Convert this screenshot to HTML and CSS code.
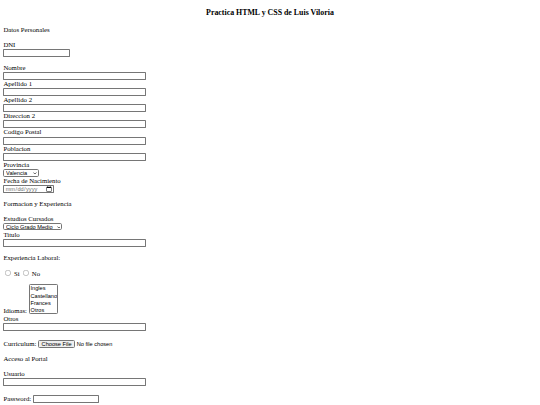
FILE: index.html
```html
<!DOCTYPE html>
<html lang="es">
<head>
<meta charset="utf-8">
<title>Practica HTML y CSS</title>
<link rel="stylesheet" href="styles.css">
</head>
<body>
<h3 class="title">Practica HTML y CSS de Luis Viloria</h3>
<form class="form">
<p>Datos Personales</p>
<p>DNI<br><input class="field" type="text"></p>
<p>Nombre<br><input class="field wide" type="text"><br>Apellido 1<br><input class="field wide" type="text"><br>Apellido 2<br><input class="field wide" type="text"><br>Direccion 2<br><input class="field wide" type="text"><br>Codigo Postal<br><input class="field wide" type="text"><br>Poblacion<br><input class="field wide" type="text"><br>Provincia<br><span class="sel"><select class="select prov"><option>Valencia</option><option>Madrid</option><option>Barcelona</option></select><svg class="chev" viewBox="0 0 10 6" width="9" height="6"><path d="M1 1l4 4 4-4" fill="none" stroke="#000" stroke-width="1.6"/></svg></span><br>Fecha de Nacimiento<br><input class="field date" type="date"></p>
<p>Formacion y Experiencia</p>
<p>Estudios Cursados<br><span class="sel"><select class="select est"><option>Ciclo Grado Medio</option><option>Ciclo Grado Superior</option></select><svg class="chev" viewBox="0 0 10 6" width="9" height="6"><path d="M1 1l4 4 4-4" fill="none" stroke="#000" stroke-width="1.6"/></svg></span><br>Titulo<br><input class="field wide" type="text"></p>
<p>Experiencia Laboral:</p>
<p><input class="radio" type="radio" name="exp"> Si <input class="radio" type="radio" name="exp"> No</p>
<p>Idiomas: <select class="list" multiple size="4"><option>Ingles</option><option>Castellano</option><option>Frances</option><option>Otros</option></select><br>Otros<br><input class="field wide" type="text"></p>
<p class="file-row">Curriculum: <input class="file" type="file"></p>
<p>Acceso al Portal</p>
<p>Usuario<br><input class="field wide" type="text"></p>
<p class="pass-row">Password: <input class="field" type="password"></p>
</form>
</body>
</html>
```
FILE: styles.css
```css
html {
  zoom: 0.421875;
}
body {
  margin: 8px;
  font-family: "Liberation Serif", "Times New Roman", serif;
  font-size: 16px;
  line-height: 1.2;
  color: #000;
  background: #fff;
}
.title {
  text-align: center;
  font-size: 18.72px;
  font-weight: bold;
  margin: 12px 0 18.72px;
}
.form p {
  margin: 16px 0;
}
.form .file-row {
  margin-top: 20px;
}
.form .pass-row {
  margin-top: 21px;
}
.field {
  box-sizing: border-box;
  width: 158px;
  height: 19px;
  padding: 1px 2px;
  border: 1px solid #767676;
  border-radius: 2px;
  background: #fff;
  font-family: "Liberation Sans", Arial, sans-serif;
  font-size: 13.333px;
  vertical-align: baseline;
}
.wide {
  width: 337px;
}
.date {
  width: 121px;
  color: #6d6d6d;
}
.sel {
  position: relative;
  display: inline-block;
}
.select {
  appearance: none;
  -webkit-appearance: none;
  box-sizing: border-box;
  height: 18px;
  padding: 0 16px 0 4px;
  border: 1px solid #767676;
  border-radius: 4px;
  background: #fff;
  color: #000;
  font-family: "Liberation Sans", Arial, sans-serif;
  font-size: 13.333px;
}
.prov {
  width: 84px;
}
.est {
  width: 140px;
}
.chev {
  position: absolute;
  right: 5px;
  top: 7px;
}
.list {
  box-sizing: border-box;
  width: 69px;
  height: 70px;
  border: 1px solid #767676;
  border-radius: 3px;
  font-family: "Liberation Sans", Arial, sans-serif;
  font-size: 13.333px;
  overflow: hidden;
}
.file {
  font-family: "Liberation Sans", Arial, sans-serif;
  font-size: 13.333px;
}
.radio {
  margin: 3px 3px 0 5px;
}
```
